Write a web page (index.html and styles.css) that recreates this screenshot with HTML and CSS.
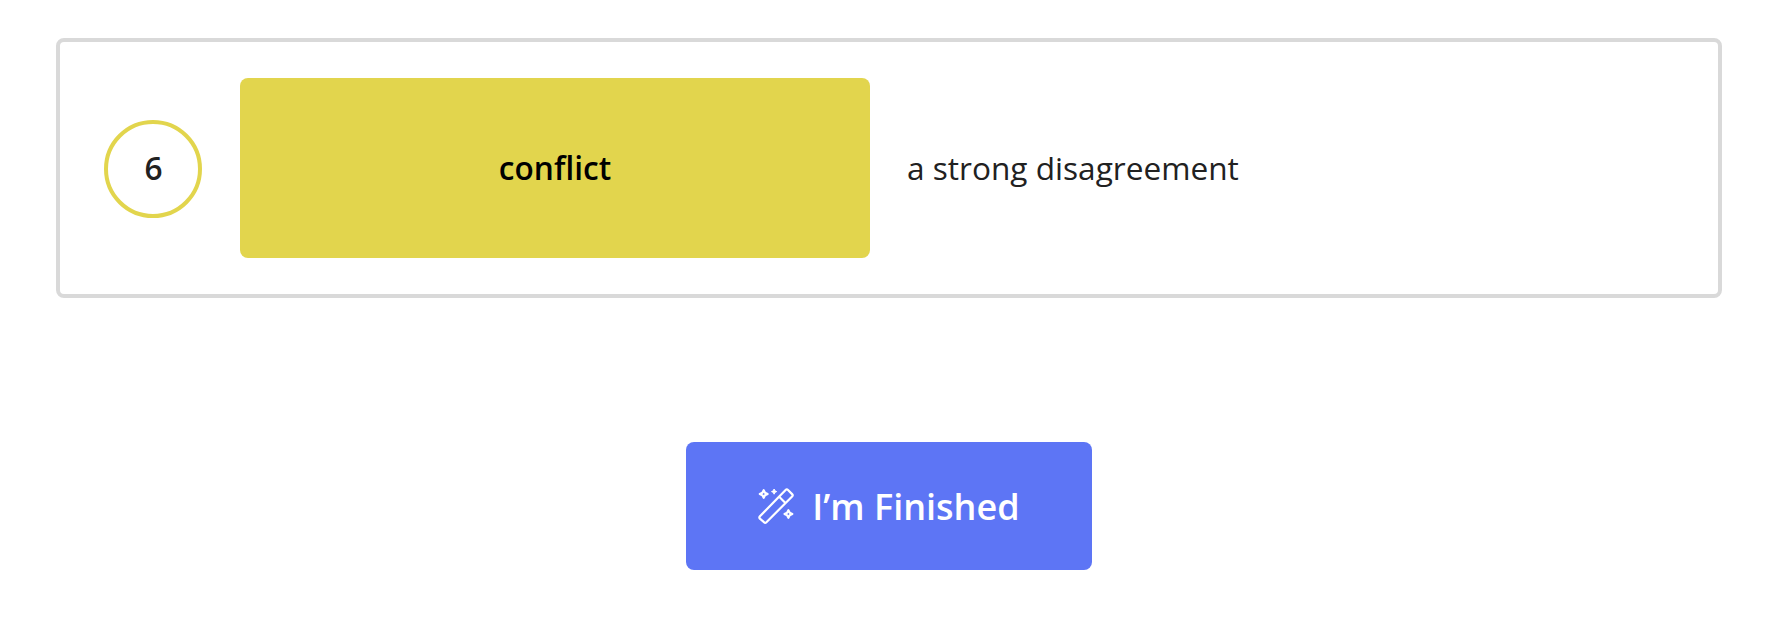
FILE: index.html
```
<!DOCTYPE html>
<html lang="en">
<head>
    <meta charset="UTF-8">
    <meta name="viewport" content="width=device-width, initial-scale=1.0">
    <title>Vocabulary</title>
    <link rel="stylesheet" href="styles.css">
</head>
<body>
    <div class="container">
        <div class="question">
            <div class="number">6</div>
            <div class="word">conflict</div>
            <div class="definition">a strong disagreement</div>
        </div>

        <button class="btn">
            <svg class="icon" viewBox="0 0 36 36" fill="none" stroke="currentColor" stroke-width="2.2" stroke-linejoin="round">
                <!-- wand -->
                <path d="M1.9 28.3 L27.6 2 Q28.8 0.8 30 2 L34.1 6.1 Q35.3 7.3 34.1 8.5 L8.4 34.2 Q7.2 35.4 6 34.2 L1.9 30.7 Q0.8 29.5 1.9 28.3 Z"/>
                <path d="M21.2 8.8 L27.4 15"/>
                <!-- sparkles -->
                <path d="M5.7 2.2 L7 4.8 L9.6 6 L7 7.2 L5.7 9.8 L4.4 7.2 L1.8 6 L4.4 4.8 Z"/>
                <path d="M30.4 22.2 L31.7 24.8 L34.3 26 L31.7 27.2 L30.4 29.8 L29.1 27.2 L26.5 26 L29.1 24.8 Z"/>
                <path class="star" d="M16.1 1 L16.9 2.8 L18.7 3.6 L16.9 4.4 L16.1 6.2 L15.3 4.4 L13.5 3.6 L15.3 2.8 Z"/>
            </svg>
            <span>I’m Finished</span>
        </button>
    </div>
</body>
</html>
```
FILE: styles.css
```
body {
    background-color: #fff;
    color: #212121;
    font-family: "Open Sans", sans-serif;
    font-size: 31.6px;
    margin: 0;
}

.container {
    width: 1666px;
    margin: 0 auto;
    padding: 38px 66px 56px 56px;
}

.question {
    display: flex;
    align-items: center;
    padding: 36px 44px;
    border: 4px solid #d9d9d9;
    border-radius: 8px;
}

.number {
    display: flex;
    align-items: center;
    justify-content: center;
    box-sizing: border-box;
    width: 98px;
    height: 98px;
    margin: 2px 38px 0 0;
    padding: 0 0 3px 1px;
    border: 4px solid #e2d54d;
    border-radius: 50%;
    font-weight: 600;
}

.word {
    display: flex;
    align-items: center;
    justify-content: center;
    box-sizing: border-box;
    width: 630px;
    height: 180px;
    margin-right: 37px;
    padding-bottom: 2px;
    background-color: #e2d54d;
    border-radius: 8px;
    color: #000;
    font-weight: 600;
}

.definition {
    padding-bottom: 2px;
}

.btn {
    display: flex;
    align-items: center;
    justify-content: center;
    width: 406px;
    height: 128px;
    margin: 144px auto 0;
    padding: 0;
    background-color: #5d75f5;
    border: none;
    border-radius: 8px;
    color: #fff;
    font-family: inherit;
    font-size: 36px;
    font-weight: 600;
    cursor: pointer;
}

.icon {
    width: 36px;
    height: 36px;
    margin-right: 18px;
    overflow: visible;
}

.icon .star {
    fill: currentColor;
    stroke-width: 1;
}
```
